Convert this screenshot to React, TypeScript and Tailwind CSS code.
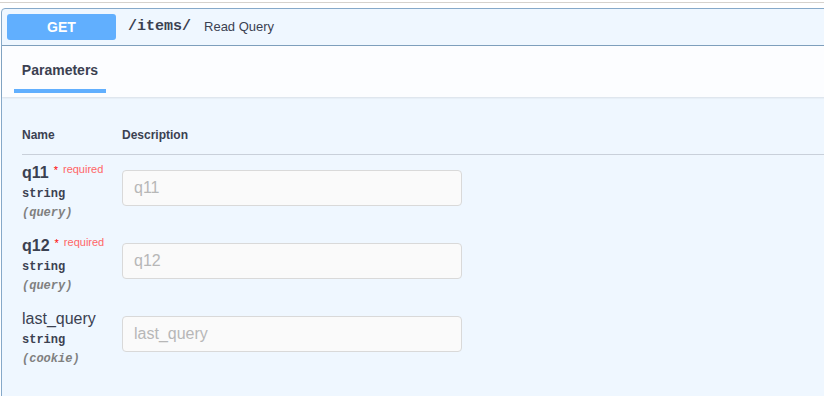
const PARAMS = [
  { name: "q11", required: true, type: "string", where: "(query)" },
  { name: "q12", required: true, type: "string", where: "(query)" },
  { name: "last_query", required: false, type: "string", where: "(cookie)" },
];

const sans = "font-['Liberation_Sans',Arial,sans-serif]";
const mono = "font-['Liberation_Mono','Courier_New',monospace]";

export default function App() {
  return (
    <div className={`w-[824px] h-[396px] overflow-hidden bg-white text-[#3b4151] ${sans}`}>
      <div className="h-[3px] border-b border-[#d6d2cd]" />
      <div className="mt-[5px] ml-[1px] w-[880px] h-[500px] rounded-[4px] border border-[#86a9c9] bg-[#eff7ff]">
        {/* summary */}
        <div className="flex items-center h-[37px] px-[5px] border-b border-[#7fa0bd]">
          <span className="w-[109px] h-[26px] flex items-center justify-center rounded-[3px] bg-[#61affe] text-white text-[14px] font-bold">
            GET
          </span>
          <span className={`ml-[12px] text-[15px] font-bold text-[#3b4151] ${mono}`}>/items/</span>
          <span className="ml-[13px] text-[13px] text-[#3b4151]">Read Query</span>
        </div>

        {/* section header */}
        <div className="h-[51px] bg-[#fcfdff] shadow-[0_1px_2px_rgba(0,0,0,0.1)] pl-[12px] flex items-end">
          <div className="w-[92px] flex flex-col items-center">
            <span className="text-[14px] font-bold leading-[18px] text-[#3b4151]">Parameters</span>
            <div className="mt-[10px] mb-[4px] h-[4px] w-full bg-[#61affe]" />
          </div>
        </div>

        {/* table */}
        <div className="pt-[20px] pl-[20px]">
          <div className="flex border-b border-[#c9d0da] pt-[12px] pb-[13px] text-[12px] font-bold leading-[12px]">
            <div className="w-[100px]">Name</div>
            <div>Description</div>
          </div>
          {PARAMS.map((p) => (
            <div key={p.name} className="flex h-[73px]">
              <div className="w-[100px] pt-[8px]">
                <div className="flex items-start h-[20px] leading-[20px]">
                  <span className={`text-[16px] ${p.required ? "font-bold" : ""}`}>{p.name}</span>
                  {p.required && (
                    <>
                      <span className="ml-[5px] text-[11px] leading-[14px] text-[#ff0000]">*</span>
                      <span className="ml-[5px] text-[11px] leading-[12px] text-[#ff6666]">required</span>
                    </>
                  )}
                </div>
                <div className={`mt-[3px] text-[12px] leading-[16px] font-bold ${mono}`}>{p.type}</div>
                <div className={`mt-[3px] text-[12px] leading-[16px] font-bold italic text-[#808080] ${mono}`}>
                  {p.where}
                </div>
              </div>
              <div className="pt-[15px]">
                <input
                  placeholder={p.name}
                  className="w-[340px] h-[36px] rounded-[4px] border border-[#d9d9d9] bg-[#fafafa] px-[11px] text-[16px] placeholder:text-[#b7b7b7] outline-none"
                />
              </div>
            </div>
          ))}
        </div>
      </div>
    </div>
  );
}
